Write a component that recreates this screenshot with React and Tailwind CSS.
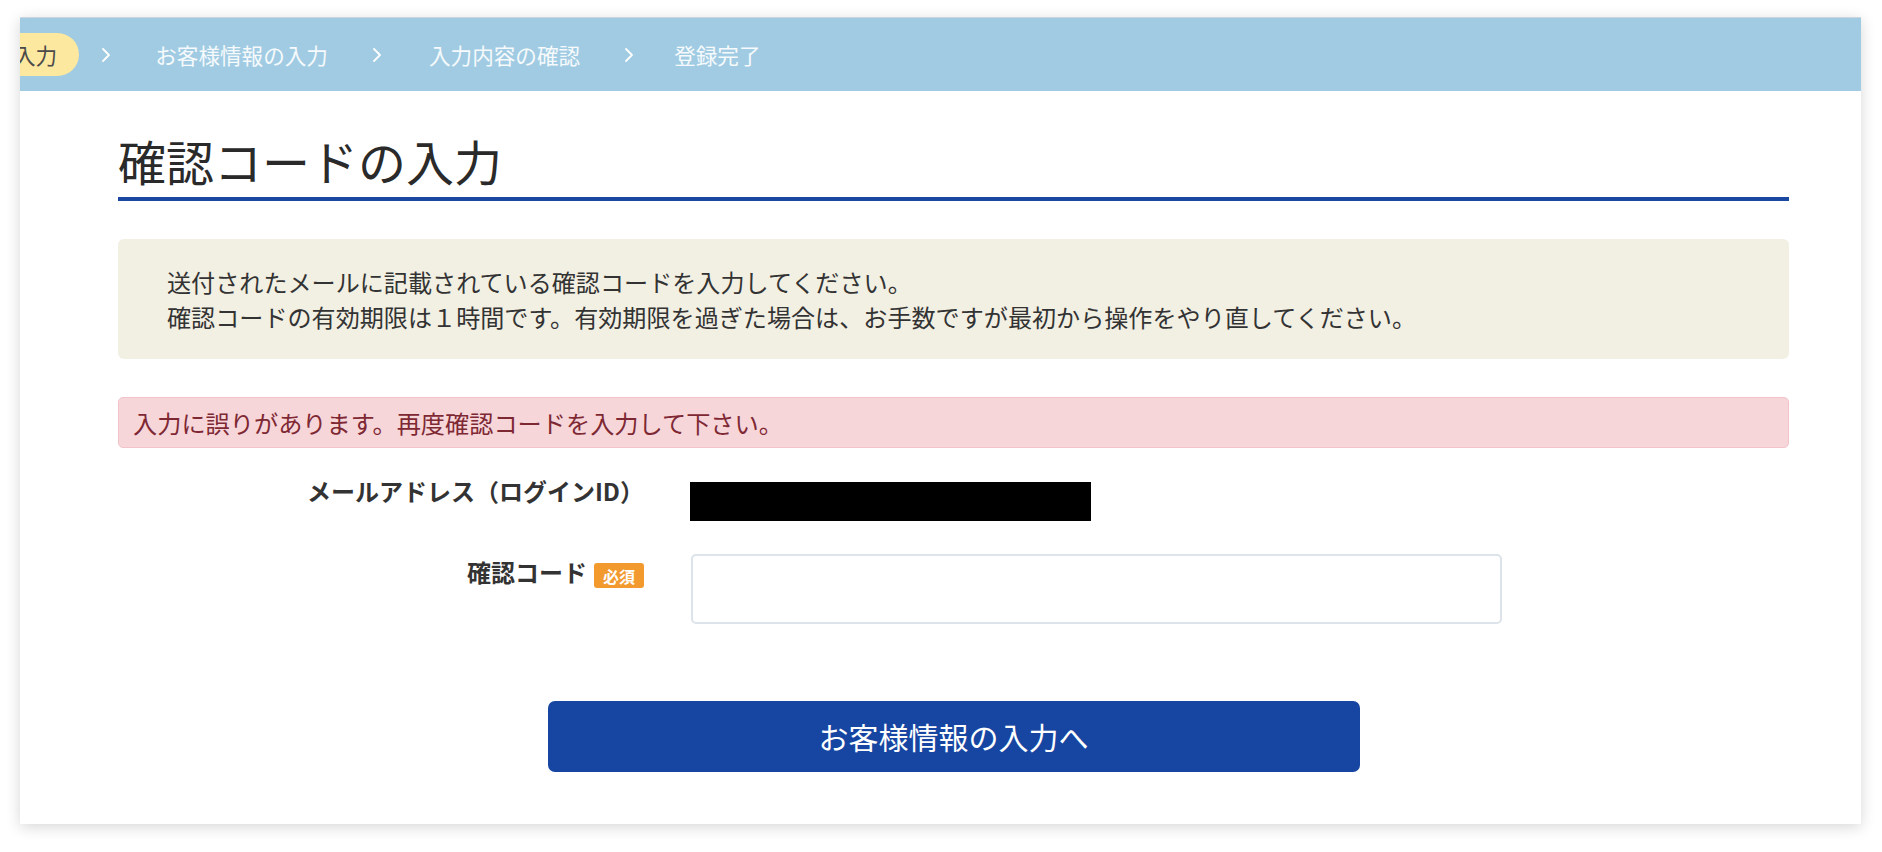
import React from "react";

const FONT = { fontFamily: '"Noto Sans CJK JP", "Noto Sans", sans-serif' };

function Chevron() {
  return (
    <svg width="10" height="16" viewBox="0 0 10 16" className="mx-[22px] shrink-0">
      <polyline points="2,2 8,8 2,14" fill="none" stroke="#ffffff" strokeWidth="1.8" strokeLinecap="round" strokeLinejoin="round" />
    </svg>
  );
}

export default function App() {
  return (
    <div className="min-h-screen bg-white pt-[17px] pl-[20px]" style={FONT}>
      <div className="w-[1841px] bg-white shadow-[0_3px_14px_rgba(0,0,0,0.16)] overflow-hidden">
        {/* breadcrumb */}
        <div className="h-[74px] bg-[#a0cbe2] flex items-center overflow-hidden border-t border-[#c9d6dd]">
          <div className="flex items-center text-[21.6px] leading-none text-white/90 whitespace-nowrap">
            <div className="-ml-[30px] h-[43px] flex items-center pl-[24px] pr-[22px] rounded-full bg-[#fde8a0] text-[#4a4a4a]">
              入力
            </div>
            <Chevron />
            <div className="px-[22px]">お客様情報の入力</div>
            <Chevron />
            <div className="pl-[25px] pr-[22px]">入力内容の確認</div>
            <Chevron />
            <div className="pl-[18px] pr-[22px]">登録完了</div>
          </div>
        </div>

        {/* content */}
        <div className="pl-[98px] pr-[72px] pt-[39px] pb-[52px] text-[#333333]">
          <div className="border-b-4 border-[#1a48a0] pb-[7px]">
            <h1 className="text-[48px] leading-[60px] font-normal text-[#2a2a2a]">確認コードの入力</h1>
          </div>

          <div className="mt-[38px] h-[120px] rounded-[6px] bg-[#f2efe3] pl-[49px] flex flex-col justify-center text-[24.1px] leading-[35px] text-[#333333]">
            <p>送付されたメールに記載されている確認コードを入力してください。</p>
            <p>確認コードの有効期限は１時間です。有効期限を過ぎた場合は、お手数ですが最初から操作をやり直してください。</p>
          </div>

          <div className="mt-[38px] h-[51px] rounded-[5px] bg-[#f7d6da] border border-[#f2c4ca] pl-[14px] flex items-center text-[24.2px] leading-[36px] text-[#7e2833]">
            入力に誤りがあります。再度確認コードを入力して下さい。
          </div>

          {/* form */}
          <div className="mt-[25px] flex">
            <div className="w-[526px] text-right text-[24px] leading-[36px] font-bold text-[#333333]">
              メールアドレス（ログインID）
            </div>
            <div className="ml-[46px]">
              <div className="mt-[9px] h-[39px] w-[401px] bg-black" />
            </div>
          </div>

          <div className="mt-[33px] flex">
            <div className="w-[526px] flex justify-end items-start">
              <span className="text-[24px] leading-[36px] font-bold text-[#333333]">確認コード</span>
              <span className="ml-[7px] mt-[9px] h-[25px] w-[50px] rounded-[3px] bg-[#f29a2e] text-white text-[16px] font-bold flex items-center justify-center leading-none">
                必須
              </span>
            </div>
            <div className="ml-[47px]">
              <input
                type="text"
                className="block h-[70px] w-[811px] rounded-[5px] border-2 border-[#dde3ea] bg-white outline-none px-3 text-[24px]"
              />
            </div>
          </div>

          <div className="mt-[77px] flex justify-center">
            <button className="h-[71px] w-[812px] rounded-[7px] bg-[#1746a2] text-white text-[30px] font-normal">
              お客様情報の入力へ
            </button>
          </div>
        </div>
      </div>
    </div>
  );
}
